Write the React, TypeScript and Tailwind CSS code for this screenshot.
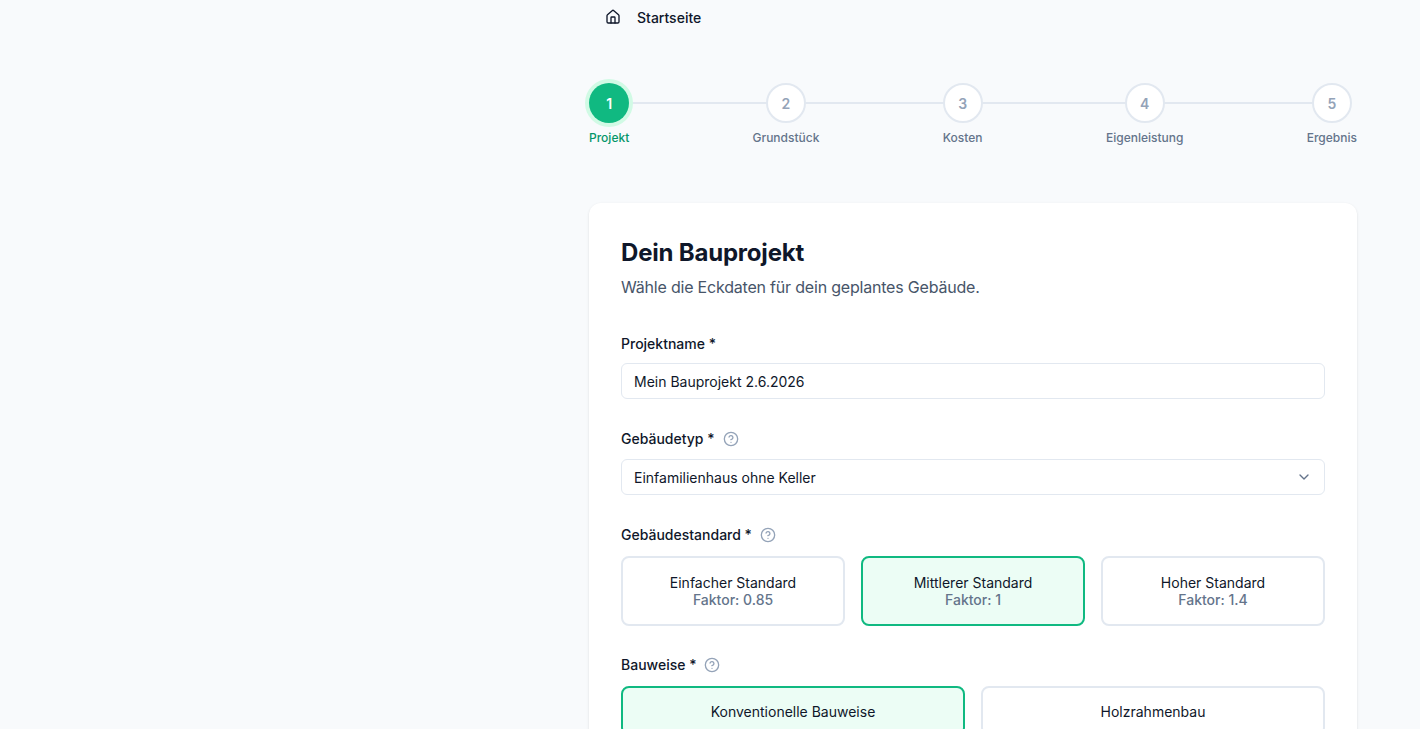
import React from "react";

const Help = () => (
  <svg width="16" height="16" viewBox="0 0 24 24" fill="none" stroke="#94a3b8" strokeWidth="2" strokeLinecap="round" strokeLinejoin="round">
    <circle cx="12" cy="12" r="10" />
    <path d="M9.09 9a3 3 0 0 1 5.83 1c0 2-3 3-3 3" />
    <path d="M12 17h.01" />
  </svg>
);

const steps = ["Projekt", "Grundstück", "Kosten", "Eigenleistung", "Ergebnis"];

export default function App() {
  return (
    <div className="min-h-[729px] bg-[#f8fafc] flex" style={{ fontFamily: "Inter, 'Noto Sans', sans-serif" }}>
      <div className="w-[589px] shrink-0" />
      <div className="w-[768px] shrink-0">
        <div className="flex items-center gap-4 h-[34px] pl-[16px] text-[14px] font-medium text-[#0f172a]">
          <svg width="16" height="16" viewBox="0 0 24 24" fill="none" stroke="currentColor" strokeWidth="2" strokeLinecap="round" strokeLinejoin="round">
            <path d="M15 21v-8a1 1 0 0 0-1-1h-4a1 1 0 0 0-1 1v8" />
            <path d="M3 10a2 2 0 0 1 .709-1.528l7-5.999a2 2 0 0 1 2.582 0l7 5.999A2 2 0 0 1 21 10v9a2 2 0 0 1-2 2H5a2 2 0 0 1-2-2z" />
          </svg>
          <span>Startseite</span>
        </div>
        <div className="relative mt-[49px] flex justify-between">
          <div className="absolute left-[20px] right-[20px] top-[19px] h-[2px] bg-[#e2e8f0]" />
          {steps.map((s, i) => (
            <div key={s} className="relative flex flex-col items-center">
              {i === 0 ? (
                <div className="w-[40px] h-[40px] rounded-full bg-[#10b981] ring-4 ring-[#d1fae5] flex items-center justify-center text-white text-[14px] font-semibold">1</div>
              ) : (
                <div className="w-[40px] h-[40px] rounded-full bg-white border-2 border-[#e2e8f0] flex items-center justify-center text-[#94a3b8] text-[14px] font-semibold">{i + 1}</div>
              )}
              <div className={"mt-[6px] text-[12px] font-medium " + (i === 0 ? "text-[#059669]" : "text-[#64748b]")}>{s}</div>
            </div>
          ))}
        </div>
        <div className="mt-[56px] bg-white rounded-xl shadow-sm px-[32px] pt-[34px] pb-8">
          <h1 className="text-[24px] font-bold text-[#0f172a] leading-[32px] tracking-[-0.2px]">Dein Bauprojekt</h1>
          <p className="mt-[6px] text-[16px] text-[#475569] leading-[24px] tracking-[-0.2px]">Wähle die Eckdaten für dein geplantes Gebäude.</p>

          <div className="mt-[35px] text-[14px] font-medium text-[#0f172a] leading-[20px]">Projektname *</div>
          <div className="mt-[9px] h-[36px] border border-[#e2e8f0] rounded-md px-3 flex items-center text-[14px] text-[#0f172a]">Mein Bauprojekt 2.6.2026</div>

          <div className="mt-[30px] flex items-center gap-2 text-[14px] font-medium text-[#0f172a] leading-[20px]">Gebäudetyp * <Help /></div>
          <div className="mt-[10px] h-[36px] border border-[#e2e8f0] rounded-md px-3 flex items-center justify-between text-[14px] text-[#0f172a]">
            <span>Einfamilienhaus ohne Keller</span>
            <svg width="16" height="16" viewBox="0 0 24 24" fill="none" stroke="#64748b" strokeWidth="2" strokeLinecap="round" strokeLinejoin="round"><path d="m6 9 6 6 6-6" /></svg>
          </div>

          <div className="mt-[30px] flex items-center gap-2 text-[14px] font-medium text-[#0f172a] leading-[20px]">Gebäudestandard * <Help /></div>
          <div className="mt-[11px] grid grid-cols-3 gap-4">
            {[["Einfacher Standard", "0.85"], ["Mittlerer Standard", "1"], ["Hoher Standard", "1.4"]].map(([t, f], i) => (
              <div key={t} className={"h-[70px] rounded-lg border-2 flex flex-col items-center justify-center text-[14px] leading-[17px] " + (i === 1 ? "border-[#10b981] bg-[#ecfdf5]" : "border-[#e2e8f0] bg-white")}>
                <div className="text-[#0f172a]">{t}</div>
                <div className="text-[#64748b] font-medium">Faktor: {f}</div>
              </div>
            ))}
          </div>

          <div className="mt-[29px] flex items-center gap-2 text-[14px] font-medium text-[#0f172a] leading-[20px]">Bauweise * <Help /></div>
          <div className="mt-[11px] grid grid-cols-2 gap-4">
            {["Konventionelle Bauweise", "Holzrahmenbau"].map((t, i) => (
              <div key={t} className={"h-[50px] rounded-lg border-2 flex items-center justify-center text-[14px] text-[#0f172a] " + (i === 0 ? "border-[#10b981] bg-[#ecfdf5]" : "border-[#e2e8f0] bg-white")}>{t}</div>
            ))}
          </div>
        </div>
      </div>
    </div>
  );
}
